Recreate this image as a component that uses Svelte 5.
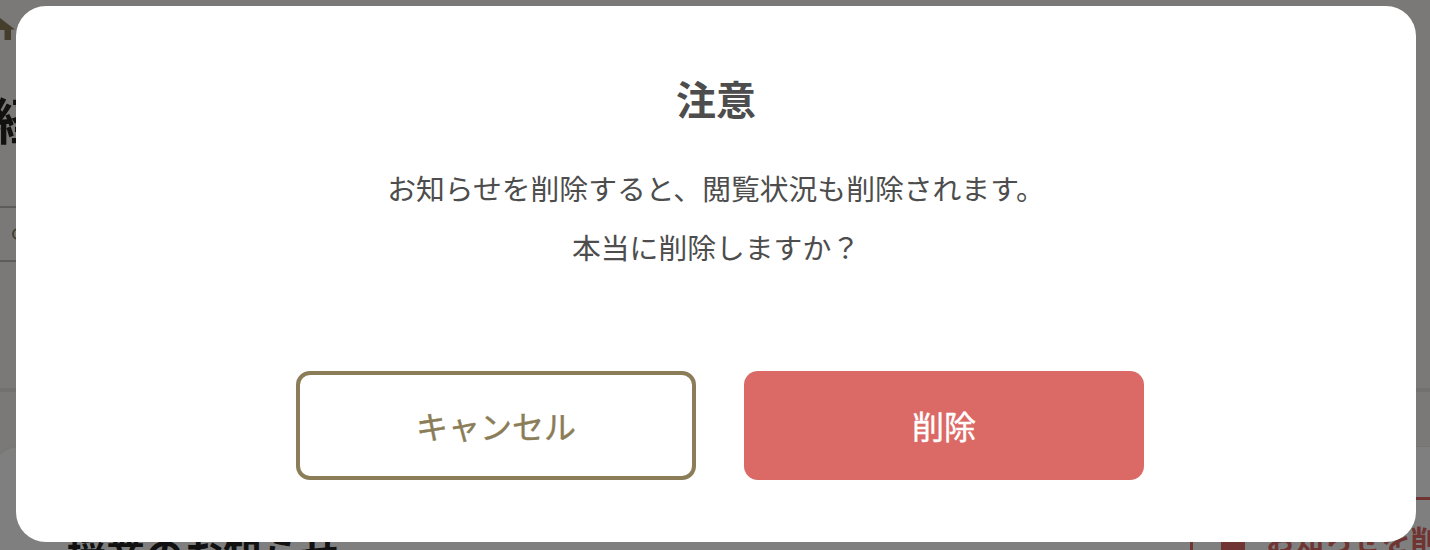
<script>
    let title = "注意";
    let lines = ["お知らせを削除すると、閲覧状況も削除されます。", "本当に削除しますか？"];
</script>

<div class="page">
    <nav class="crumbs">
        <svg viewBox="0 0 30 22" width="30" height="22">
            <path d="M15 0 L30 11.5 L26 11.5 L26 22 L19.500 22 L19.500 12 L10.500 12 L10.500 22 L4 22 L4 11.500 L0 11.500 Z" fill="#8a7d58" />
        </svg>
    </nav>
    <h1>経</h1>
    <div class="tabs">
        <span class="ring"></span>
    </div>
    <hr />
    <section class="panel">
        <h2>授業のお知らせ</h2>
        <div class="remove">
            <span class="trash"></span>
            <span>お知らせを削除</span>
        </div>
    </section>
</div>

<div class="overlay">
    <div class="modal">
        <h3>{title}</h3>
        <div class="body">
            {#each lines as line}
                <p>{line}</p>
            {/each}
        </div>
        <div class="actions">
            <button class="cancel">キャンセル</button>
            <button class="danger">削除</button>
        </div>
    </div>
</div>

<style>
    :global(body) {
        margin: 0;
        overflow: hidden;
    }

    .page {
        height: 550px;
        overflow: hidden;
        background: #f6f3ee;
        color: #222;
        font-family: "Noto Sans CJK JP", sans-serif;
    }

    .crumbs {
        height: 22px;
        padding-top: 18px;
        margin-left: -15px;
    }
    .crumbs svg {
        display: block;
    }

    h1 {
        margin: 43px 0 0 -8px;
        height: 73px;
        font-size: 50px;
        line-height: 70px;
        font-weight: 700;
    }

    .tabs {
        margin-top: 50px;
        width: 200px;
        height: 52px;
        border-top: 2px solid #bdb9b4;
        border-bottom: 2px solid #bdb9b4;
        display: flex;
        align-items: center;
        padding-left: 12px;
    }
    .ring {
        width: 8px;
        height: 8px;
        border: 2px solid #8a7d58;
        border-radius: 50%;
    }

    hr {
        margin: 126px 0 0;
        border: 0;
        height: 4px;
        background: #e6e3de;
    }

    .panel {
        margin: 54px 0 0 -10px;
        height: 140px;
        background: #fff;
        border-top: 1px solid #ece9e4;
        border-radius: 30px 0 0 0;
        display: flex;
        align-items: flex-start;
        justify-content: space-between;
    }

    h2 {
        margin: 76px 0 0 77px;
        font-size: 39px;
        line-height: 60px;
        font-weight: 700;
        white-space: nowrap;
    }

    .remove {
        flex: none;
        width: 300px;
        margin-top: 50px;
        margin-right: -60px;
        height: 84px;
        box-sizing: border-box;
        border: 3px solid #e06a66;
        display: flex;
        align-items: center;
        gap: 21px;
        padding-left: 28px;
        color: #e06a66;
        font-size: 29px;
        font-weight: 700;
        white-space: nowrap;
    }
    .trash {
        flex: none;
        width: 24px;
        height: 40px;
        background: #e06a66;
    }

    .overlay {
        position: fixed;
        inset: 0;
        background: rgba(0, 0, 0, 0.5);
        display: flex;
        align-items: flex-start;
        padding: 6px 0 0 16px;
    }

    .modal {
        width: 1400px;
        height: 536px;
        box-sizing: border-box;
        padding-top: 72px;
        background: #fff;
        border-radius: 30px;
        display: flex;
        flex-direction: column;
        align-items: center;
        color: #4d4d4d;
        font-family: "Noto Sans CJK JP", sans-serif;
    }

    h3 {
        margin: 0;
        font-size: 40px;
        line-height: 40px;
        font-weight: 700;
    }

    .body {
        margin-top: 40px;
        text-align: center;
        font-size: 28.8px;
        line-height: 59px;
    }
    .body p {
        margin: 0;
    }

    .actions {
        margin: 95px 0 0 8px;
        display: flex;
        gap: 48px;
    }

    button {
        width: 400px;
        height: 109px;
        box-sizing: border-box;
        padding: 0 0 2px;
        border-radius: 14px;
        font-family: inherit;
        font-size: 32px;
        font-weight: 400;
        -webkit-text-stroke: 0.4px currentColor;
    }
    .cancel {
        background: #fff;
        border: 4px solid #8a7d58;
        color: #8a7d58;
    }
    .danger {
        background: #db6966;
        border: 0;
        color: #fff;
    }
</style>
